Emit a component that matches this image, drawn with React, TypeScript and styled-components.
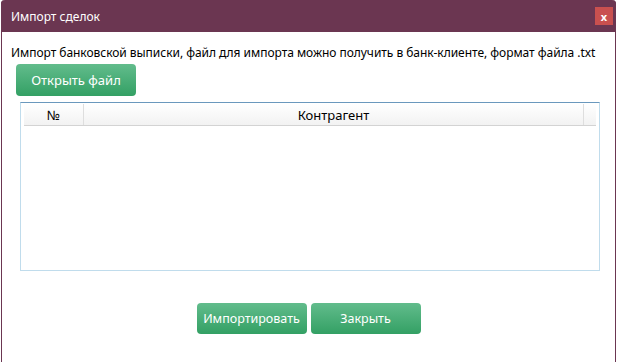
import React from "react";
import styled, { createGlobalStyle } from "styled-components";

const FONT = `"Noto Sans", "Open Sans", Verdana, sans-serif`;

const Global = createGlobalStyle`
  html, body { margin: 0; padding: 0; background: #ffffff; }
  body { font-family: ${FONT}; }
`;

const Page = styled.div`
  width: 617px;
  height: 362px;
  overflow: hidden;
  padding-left: 1px;
  box-sizing: border-box;
`;

const Dialog = styled.div`
  width: 615px;
  height: 380px;
  box-sizing: border-box;
  border-left: 1px solid #6b3651;
  border-right: 1px solid #6b3651;
  border-radius: 4px 4px 0 0;
  display: flex;
  flex-direction: column;
  background: #fff;
`;

const TitleBar = styled.div`
  height: 32px;
  margin: 0 -1px;
  background: #6b3651;
  border-radius: 4px 4px 0 0;
  display: flex;
  align-items: center;
  justify-content: space-between;
  padding: 0 3px 0 10px;
  color: #fff;
  font-size: 12px;
`;

const CloseButton = styled.div`
  width: 18px;
  height: 18px;
  background: #c9504f;
  color: #fff;
  font-size: 11px;
  font-weight: bold;
  display: flex;
  align-items: center;
  justify-content: center;
  line-height: 1;
`;

const Body = styled.div`
  padding: 12px 0 0 9px;
  display: flex;
  flex-direction: column;
`;

const Hint = styled.div`
  font-size: 12px;
  color: #000;
  line-height: 17px;
  white-space: nowrap;
  letter-spacing: -0.04px;
`;

const GreenButton = styled.button<{ $w: number }>`
  width: ${(p) => p.$w}px;
  height: ${(p) => (p.$w === 120 ? 32 : 31)}px;
  border: none;
  border-radius: 4px;
  background: linear-gradient(#62bc8c, #33a064);
  color: #fff;
  font-family: ${FONT};
  font-size: ${(p) => (p.$w === 120 ? 13 : 12.5)}px;
  padding: 0;
  cursor: pointer;
`;

const OpenRow = styled.div`
  margin-top: 3px;
  padding-left: 5px;
  display: flex;
`;

const Table = styled.div`
  margin: 6px 0 0 9px;
  width: 580px;
  height: 169px;
  box-sizing: border-box;
  border: 1px solid #c0dcec;
  border-top-color: #6a98bd;
  padding: 0 3px 0 3px;
`;

const HeaderRow = styled.div`
  display: grid;
  grid-template-columns: 60px 1fr 12px;
  height: 21px;
  margin-top: 1px;
  background: linear-gradient(#ffffff, #f2f2f2);
  border-bottom: 1px solid #d3d3d3;
`;

const HeaderCell = styled.div<{ $last?: boolean }>`
  display: flex;
  align-items: center;
  justify-content: center;
  font-size: 13px;
  color: #000;
  border-right: ${(p) => (p.$last ? "none" : "1px solid #dedede")};
`;

const Footer = styled.div`
  display: flex;
  justify-content: center;
  gap: 4px;
  margin-top: 32px;
`;

export default function App() {
  return (
    <>
      <Global />
      <Page>
        <Dialog>
          <TitleBar>
            <span>Импорт сделок</span>
            <CloseButton>x</CloseButton>
          </TitleBar>
          <Body>
            <Hint>
              Импорт банковской выписки, файл для импорта можно получить в банк-клиенте, формат файла .txt
            </Hint>
            <OpenRow>
              <GreenButton $w={120}>Открыть файл</GreenButton>
            </OpenRow>
            <Table>
              <HeaderRow>
                <HeaderCell>№</HeaderCell>
                <HeaderCell>Контрагент</HeaderCell>
                <HeaderCell $last />
              </HeaderRow>
            </Table>
          </Body>
          <Footer>
            <GreenButton $w={110}>Импортировать</GreenButton>
            <GreenButton $w={110}>Закрыть</GreenButton>
          </Footer>
        </Dialog>
      </Page>
    </>
  );
}
